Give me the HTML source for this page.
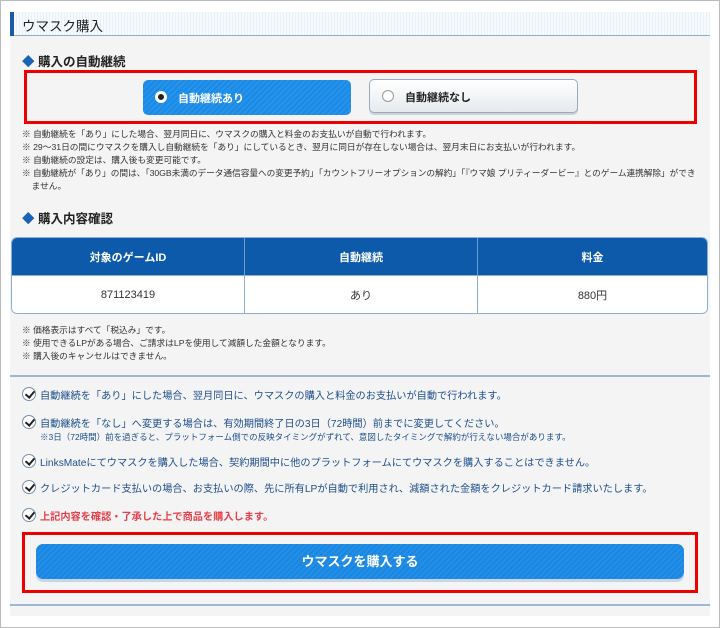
<!DOCTYPE html>
<html><head><meta charset="utf-8"><style>
*{margin:0;padding:0;box-sizing:border-box}
body{width:720px;height:628px;background:#fff;font-family:"Liberation Sans","Noto Sans CJK JP",sans-serif;position:relative;overflow:hidden;color:#333}
.frame{position:absolute;left:0;top:0;width:720px;height:628px;border:1px solid #bbb}
.panel{position:absolute;left:10px;top:12px;width:700px;height:604px;background:#f4f4f4}
.a{position:absolute;white-space:nowrap}
.title{position:absolute;left:10px;top:12px;width:700px;height:24px;background:repeating-linear-gradient(90deg,#e9f1f8 0 1px,#f7fafd 1px 3px);border-bottom:1px solid #8ab0d4}
.title:before{content:"";position:absolute;left:0;top:0;width:4px;height:24px;background:#1a5aa8}
.h{font-size:12.5px;font-weight:bold;color:#222}
.h b{color:#1a63b5}
.note{font-size:8.7px;color:#333;line-height:13px}
.red{position:absolute;border:3px solid #ee0000}
.btn1{position:absolute;left:143px;top:80px;width:208px;height:35px;border-radius:5px;background:repeating-linear-gradient(135deg,#1a8ae6 0 2px,#2793ea 2px 4px);color:#fff;font-size:11px;font-weight:bold}
.btn2{position:absolute;left:369px;top:79px;width:209px;height:34px;border-radius:5px;background:linear-gradient(#fff,#e6eaee);border:1px solid #9ab;box-shadow:0 2px 0 #ccd3da;font-size:11px;font-weight:bold;color:#222}
.rad{position:absolute;width:12px;height:12px;border-radius:50%;background:#fff;border:1px solid #999}
table{position:absolute;left:11px;top:237px;width:697px;border-collapse:separate;border-spacing:0;border:1px solid #8ab0d4;border-radius:6px;overflow:hidden;font-size:11px}
th{background:#0d5aaa;color:#fff;height:37px;font-weight:bold;border-left:1px solid #6c9bd0}
td{background:#fff;height:38px;text-align:center;border-left:1px solid #8ab0d4;border-top:1px solid #8ab0d4}
th:first-child,td:first-child{border-left:none}
.chk{position:absolute;left:22px;width:14px;height:14px;border-radius:50%;border:1px solid #7a8ea8;background:#fff}
.chk:after{content:"";position:absolute;left:4px;top:1px;width:4px;height:7px;border:solid #222;border-width:0 2px 2px 0;transform:rotate(40deg)}
.ct{left:40px;font-size:10.2px;color:#1e4f8c}
.line{position:absolute;left:10px;width:700px;height:2px;background:#9bb8d6}
.buy{position:absolute;left:36px;top:544px;width:648px;height:35px;border-radius:7px;background:repeating-linear-gradient(135deg,#1a86e2 0 2px,#2390e8 2px 4px);box-shadow:0 3px 0 #c8d6e4;color:#fff;font-size:13px;font-weight:bold;text-align:center;line-height:35px}
</style></head><body>
<div class="frame"></div>
<div class="panel"></div>
<div class="title"></div>
<div class="a" style="left:22px;top:15px;font-size:13.5px;color:#222">ウマスク購入</div>
<div class="a h" style="left:22px;top:51px"><b>◆</b> 購入の自動継続</div>
<div class="red" style="left:24px;top:70px;width:673px;height:54px"></div>
<div class="btn1"><div class="rad" style="left:12px;top:11px;border:3px solid #fff;background:#222"></div><span class="a" style="left:35px;top:10px">自動継続あり</span></div>
<div class="btn2"><div class="rad" style="left:12px;top:10px"></div><span class="a" style="left:35px;top:9px">自動継続なし</span></div>
<div class="a note" style="left:22px;top:128px">※ 自動継続を「あり」にした場合、翌月同日に、ウマスクの購入と料金のお支払いが自動で行われます。<br>※ 29〜31日の間にウマスクを購入し自動継続を「あり」にしているとき、翌月に同日が存在しない場合は、翌月末日にお支払いが行われます。<br>※ 自動継続の設定は、購入後も変更可能です。<br><span style="letter-spacing:-0.05px">※ 自動継続が「あり」の間は、「30GB未満のデータ通信容量への変更予約」「カウントフリーオプションの解約」「『ウマ娘 プリティーダービー』とのゲーム連携解除」ができ</span><br>&nbsp;&nbsp;&nbsp;&nbsp;ません。</div>
<div class="a h" style="left:22px;top:208px"><b>◆</b> 購入内容確認</div>
<table><tr><th style="width:232px">対象のゲームID</th><th style="width:233px">自動継続</th><th>料金</th></tr>
<tr><td>871123419</td><td>あり</td><td>880円</td></tr></table>
<div class="a note" style="left:22px;top:324px">※ 価格表示はすべて「税込み」です。<br>※ 使用できるLPがある場合、ご請求はLPを使用して減額した金額となります。<br>※ 購入後のキャンセルはできません。</div>
<div class="line" style="top:375px"></div>
<div class="chk" style="top:387px"></div><div class="a ct" style="top:387px">自動継続を「あり」にした場合、翌月同日に、ウマスクの購入と料金のお支払いが自動で行われます。</div>
<div class="chk" style="top:415px"></div><div class="a ct" style="top:415px">自動継続を「なし」へ変更する場合は、有効期間終了日の3日（72時間）前までに変更してください。</div>
<div class="a" style="left:40px;top:431px;font-size:8.5px;color:#1e4f8c">※3日（72時間）前を過ぎると、プラットフォーム側での反映タイミングがずれて、意図したタイミングで解約が行えない場合があります。</div>
<div class="chk" style="top:454px"></div><div class="a ct" style="top:454px">LinksMateにてウマスクを購入した場合、契約期間中に他のプラットフォームにてウマスクを購入することはできません。</div>
<div class="chk" style="top:480px"></div><div class="a ct" style="top:480px">クレジットカード支払いの場合、お支払いの際、先に所有LPが自動で利用され、減額された金額をクレジットカード請求いたします。</div>
<div class="chk" style="top:508px"></div><div class="a ct" style="top:508px;color:#e8404a;font-weight:bold">上記内容を確認・了承した上で商品を購入します。</div>
<div class="red" style="left:22px;top:532px;width:676px;height:61px"></div>
<div class="buy">ウマスクを購入する</div>
<div class="line" style="top:604px"></div>
</body></html>
